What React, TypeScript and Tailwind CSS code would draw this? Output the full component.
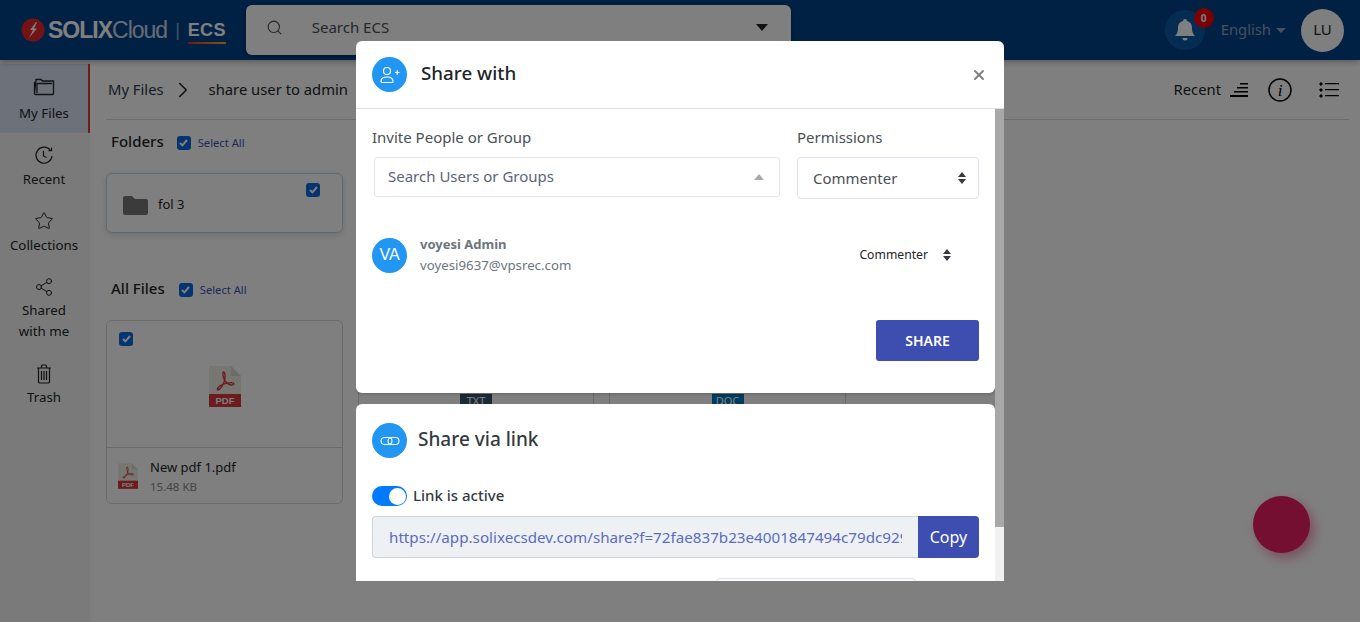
import React from 'react';
import { Search, Star, Share2, X, ChevronRight } from 'lucide-react';

const font = "font-['Noto_Sans','Open_Sans',sans-serif]";

function FolderStackIcon() {
  return (
    <svg width="22" height="18" viewBox="0 0 22 18" fill="none" stroke="currentColor" strokeWidth="1.3">
      <path d="M1.5 15.5V4.5h1.5M3 2.5V1.5h5l1.5 1.5H20.5V15.5a1 1 0 0 1-1 1H2.5a1 1 0 0 1-1-1Z" />
      <path d="M4 15V5.5h15" />
    </svg>
  );
}

function RecentIcon() {
  return (
    <svg width="20" height="20" viewBox="0 0 20 20" fill="none" stroke="currentColor" strokeWidth="1.2">
      <path d="M16.5 5.5A8 8 0 1 0 18 11" />
      <path d="M14.5 5.6h3V2.6" />
      <path d="M9.5 6v5l3 1.5" />
    </svg>
  );
}

function TrashIcon() {
  return (
    <svg width="16" height="20" viewBox="0 0 16 20" fill="none" stroke="currentColor" strokeWidth="1.2">
      <path d="M1 4h14M5.5 4V2a1 1 0 0 1 1-1h3a1 1 0 0 1 1 1v2" />
      <path d="M2.5 4v14a1 1 0 0 0 1 1h9a1 1 0 0 0 1-1V4" />
      <path d="M5.5 7v9M8 7v9M10.5 7v9" />
    </svg>
  );
}

function Check() {
  return (
    <span className="w-[14px] h-[14px] rounded-[3px] bg-[#0a6ae0] flex items-center justify-center shrink-0">
      <svg width="9" height="8" viewBox="0 0 9 8" fill="none" stroke="white" strokeWidth="2">
        <path d="M1 4l2.4 2.4L8 1" />
      </svg>
    </span>
  );
}

function PdfIcon({ w, h }: { w: number; h: number }) {
  return (
    <svg width={w} height={h} viewBox="0 0 32 41">
      <path d="M0 0h22l10 10v31H0Z" fill="#efefe4" />
      <path d="M22 0l10 10H22Z" fill="#d8d8cc" />
      <rect y="28" width="32" height="13" fill="#d9363e" />
      <text x="16" y="38" textAnchor="middle" fontSize="9.5" fontWeight="700" fill="#fff" fontFamily="Liberation Sans, sans-serif">PDF</text>
      <path d="M9 24c3-1 6-6 7-12 .4-2.500-.2-6-1.300-6s-1 3.500 0 6c1.500 4 4 6.500 7.500 7 2 .3 3-.6 2.600-1.400-.5-1-4-1-7.500-.2-3.500.8-7 2.500-8.500 4.600-.6.9-.5 2 .2 2Z" fill="none" stroke="#d9363e" strokeWidth="1.400" />
    </svg>
  );
}

function BlueCircle({ children }: { children: React.ReactNode }) {
  return (
    <div className="w-[35px] h-[35px] rounded-full bg-[#2196f3] flex items-center justify-center text-white shrink-0">
      {children}
    </div>
  );
}

function Updown({ className }: { className: string }) {
  return (
    <svg className={className} width="8" height="12" viewBox="0 0 8 12" fill="currentColor">
      <path d="M4 0l4 5H0ZM4 12L0 7h8Z" />
    </svg>
  );
}

const navItems = [
  { label: ['Recent'], icon: <RecentIcon />, h: 'h-[66px] gap-[4px]' },
  { label: ['Collections'], icon: <Star size={20} strokeWidth={1.2} />, h: 'h-[66px] gap-[4px]' },
  { label: ['Shared', 'with me'], icon: <Share2 size={20} strokeWidth={1.2} />, h: 'h-[87px] gap-[3px]' },
  { label: ['Trash'], icon: <TrashIcon />, h: 'h-[66px] gap-[3px]' },
];

function FileCard({ tag, tagColor, width }: { tag: string; tagColor: string; width: string }) {
  return (
    <div className={`${width} h-[184px] border border-[#d4d4d4] rounded-md flex flex-col`}>
      <div className="h-[126px] pt-[5px] flex items-center justify-center">
        <div className="w-[32px] h-[41px] bg-[#efefe4] flex items-end">
          <span className={`w-full h-[13px] ${tagColor} text-white text-[11px] leading-[13px] text-center`}>{tag}</span>
        </div>
      </div>
      <div className="flex-1 border-t border-[#d4d4d4]" />
    </div>
  );
}

export default function App() {
  return (
    <div className={`relative w-[1360px] h-[622px] overflow-hidden bg-white text-[#212529] ${font}`}>
      <header className="h-[60px] bg-[#004289] flex items-center pl-[21px] pr-[16px] shadow-[0_2px_6px_rgba(0,0,0,0.3)] relative">
        <div className="flex items-center font-['Liberation_Sans',sans-serif] text-white">
          <svg width="24" height="24" viewBox="0 0 24 24" className="mr-[3px]">
            <circle cx="12" cy="12" r="11.500" fill="#e8262a" />
            <path d="M15 4L9 12h3l-4 8 8-9.500h-3l3-6.500Z" fill="#fff" />
          </svg>
          <span className="text-[23px] font-bold tracking-[-1px]">SOLIX</span>
          <span className="text-[23px] font-light tracking-[-1px] opacity-80">Cloud</span>
          <span className="mx-[8px] text-[18px] opacity-50">|</span>
          <span className="relative text-[18px] font-bold tracking-[0.3px]">
            ECS
            <span className="absolute left-0 right-0 bottom-0 h-[2px] bg-gradient-to-r from-[#e8262a] to-[#f5a623]" />
          </span>
        </div>
        <div className="ml-[20px] w-[545px] h-[50px] pb-[5px] bg-white rounded-md shadow-[0_1px_4px_rgba(0,0,0,0.4)] flex items-center pl-[20px] pr-[23px] text-[#495057]">
          <Search size={17} strokeWidth={1.500} />
          <span className="ml-[29px] text-[15px]">Search ECS</span>
          <span className="ml-auto w-0 h-0 border-x-[6px] border-x-transparent border-t-[7px] border-t-[#212529]" />
        </div>
        <div className="ml-auto flex items-center">
          <div className="relative w-[40px] h-[40px] rounded-full bg-[#0b5aa8] flex items-center justify-center mr-[16px]">
            <svg width="22" height="24" viewBox="0 0 22 24" fill="white">
              <path d="M11 1a2 2 0 0 1 2 2c3.500.8 5 3.500 5 7 0 4 1 6 3 8H1c2-2 3-4 3-8 0-3.500 1.500-6.200 5-7a2 2 0 0 1 2-2ZM8.500 20h5a2.500 2.500 0 0 1-5 0Z" />
            </svg>
            <span className="absolute -top-[2px] -right-[9px] w-[20px] h-[20px] rounded-full bg-[#f40009] text-white text-[10px] font-bold flex items-center justify-center">0</span>
          </div>
          <span className="pb-[1px] text-[14.8px] text-[#8aa0c0]">English</span>
          <span className="ml-[5px] w-0 h-0 border-x-[5px] border-x-transparent border-t-[5px] border-t-[#8aa0c0]" />
          <div className="ml-[15px] w-[43px] h-[43px] pb-[1px] rounded-full bg-white flex items-center justify-center text-[15px]">LU</div>
        </div>
      </header>

      <div className="flex h-[562px]">
        <aside className="w-[90px] bg-[#f5f5f5] pt-[4px] shrink-0 text-[13.3px] text-[#212529]">
          <div className="h-[69px] bg-[#d8e3f5] border-r-2 border-[#e53935] flex flex-col items-center pt-[14px] gap-[7px]">
            <FolderStackIcon />
            <span className="leading-5">My Files</span>
          </div>
          {navItems.map((item) => (
            <div key={item.label[0]} className={`${item.h} pr-[2px] flex flex-col items-center pt-[12px]`}>
              {item.icon}
              <span className="text-center leading-[21px]">
                {item.label.map((l) => (
                  <span key={l} className="block">{l}</span>
                ))}
              </span>
            </div>
          ))}
        </aside>

        <main className="flex-1 pl-[16px] pr-[11px]">
          <div className="h-[60px] border-b border-[#d8d8d8] flex items-center pl-[2px] text-[14.8px]">
            <span className="text-[#2a3a50]">My Files</span>
            <ChevronRight size={26} strokeWidth={1.500} className="ml-[6px] mr-[13px]" />
            <span>share user to admin</span>
            <div className="ml-auto flex items-center pr-[10px]">
              <span>Recent</span>
              <svg width="18" height="14" viewBox="0 0 18 14" fill="#000" className="ml-[9px]">
                <path d="M10 0h8v1.500h-8ZM7 4h11v1.500H7ZM4 8h14v1.500H4ZM0 12h18v2H0Z" />
              </svg>
              <svg width="24" height="24" viewBox="0 0 24 24" className="ml-[20px]">
                <circle cx="12" cy="12" r="11" fill="none" stroke="#000" strokeWidth="1.500" />
                <text x="12" y="18" textAnchor="middle" fontSize="17" fontStyle="italic" fontFamily="Liberation Serif, serif">i</text>
              </svg>
              <svg width="20" height="16" viewBox="0 0 20 16" fill="#000" className="ml-[27px]">
                <path d="M0 2l2-2 2 2-2 2ZM0 8l2-2 2 2-2 2ZM0 14l2-2 2 2-2 2ZM6 1h14v1.300H6ZM6 7h14v1.300H6ZM6 13h14v1.300H6Z" />
              </svg>
            </div>
          </div>

          <div className="flex items-center h-[42px] mt-[1px] pl-[5px]">
            <span className="pb-[2px] text-[15px] font-medium">Folders</span>
            <span className="ml-[13px] mt-[2px]">
              <Check />
            </span>
            <span className="ml-[7px] mt-[2px] text-[11.2px] text-[#3f51b5]">Select All</span>
          </div>
          <div className="relative mt-[10px] w-[237px] h-[60px] pt-[4px] border border-[#b9d6e8] rounded-md shadow-[0_2px_6px_rgba(0,0,0,0.15)] flex items-center pl-[16px] gap-[10px] text-[13px]">
            <svg width="25" height="19" viewBox="0 0 25 19" fill="#777">
              <path d="M0 2a2 2 0 0 1 2-2h7l3 3h11a2 2 0 0 1 2 2v12a2 2 0 0 1-2 2H2a2 2 0 0 1-2-2Z" />
            </svg>
            <span>fol 3</span>
            <span className="absolute top-[9px] right-[22px]">
              <Check />
            </span>
          </div>

          <div className="flex items-center h-[43px] mt-[34px] pl-[5px]">
            <span className="text-[15px] font-medium">All Files</span>
            <span className="ml-[14px] mt-[3px]">
              <Check />
            </span>
            <span className="ml-[7px] mt-[3px] text-[11.2px] text-[#3f51b5]">Select All</span>
          </div>
          <div className="flex gap-[15px] mt-[10px]">
            <div className="relative w-[237px] h-[184px] border border-[#d4d4d4] rounded-md flex flex-col">
              <span className="absolute top-[11px] left-[12px]">
                <Check />
              </span>
              <div className="h-[126px] pt-[5px] flex items-center justify-center">
                <PdfIcon w={32} h={41} />
              </div>
              <div className="flex-1 border-t border-[#d4d4d4] pl-[11px] flex items-center gap-[12px]">
                <PdfIcon w={20} h={26} />
                <div>
                  <div className="text-[13px] leading-5">New pdf 1.pdf</div>
                  <div className="mt-[2px] text-[11.500px] leading-4 text-[#888]">15.48 KB</div>
                </div>
              </div>
            </div>
            <FileCard tag="TXT" tagColor="bg-[#37566b]" width="w-[236px]" />
            <FileCard tag="DOC" tagColor="bg-[#0277bd]" width="w-[237px]" />
          </div>
        </main>
      </div>

      {/* Add button */}
      <div className="absolute left-[1253px] top-[496px] w-[57px] h-[57px] rounded-full bg-[#e91e63] shadow-[4px_5px_12px_rgba(233,30,99,0.45)]" />

      {/* Backdrop */}
      <div className="absolute inset-0 bg-black/50" />

      {/* Share dialog */}
      <div className="absolute left-[356px] top-[41px] w-[648px] h-[540px] flex flex-col overflow-hidden rounded-t-md">
        <div className="h-[68px] bg-white border-b border-[#dee2e6] flex items-center pl-[16px] pr-[17px] shrink-0">
          <BlueCircle>
            <svg width="20" height="17" viewBox="0 0 20 17" fill="none" stroke="currentColor" strokeWidth="1.200">
              <circle cx="7" cy="5" r="3.500" />
              <path d="M1 15.500c0-3 2.500-4.500 6-4.500s6 1.500 6 4.500c0 .5-.5 1-1 1H2c-.5 0-1-.5-1-1ZM15 6.500h4.500M17.200 4.200v4.500" />
            </svg>
          </BlueCircle>
          <span className="ml-[14px] pb-[2px] text-[18.800px] font-medium">Share with</span>
          <X size={16} strokeWidth={3} className="ml-auto text-[#808080]" />
        </div>

        <div className="flex-1 flex min-h-0">
          <div className="w-[639px] flex flex-col gap-[11px] overflow-hidden">
            <div className="h-[284px] shrink-0 bg-white rounded-b-md px-[16px] pt-[16px] shadow-[0_1px_3px_rgba(0,0,0,0.2)]">
              <div className="flex">
                <div className="w-[425px]">
                  <div className="text-[15px] leading-[24px] text-[#495057]">Invite People or Group</div>
                  <div className="mt-[8px] ml-[2px] w-[406px] h-[40px] pb-[1px] border border-[#e3e6ea] rounded-[3px] flex items-center pl-[13px] pr-[15px] text-[15px] text-[#5a6478]">
                    Search Users or Groups
                    <span className="ml-auto w-0 h-0 border-x-[5px] border-x-transparent border-b-[6px] border-b-[#aaa]" />
                  </div>
                </div>
                <div className="w-[182px]">
                  <div className="text-[15px] leading-[24px] text-[#495057]">Permissions</div>
                  <div className="mt-[8px] h-[42px] border border-[#e0e0ea] rounded-[4px] flex items-center pl-[15px] pr-[12px] text-[15px] text-[#495057]">
                    Commenter
                    <Updown className="ml-auto text-[#343a40]" />
                  </div>
                </div>
              </div>
              <div className="flex items-center mt-[35px]">
                <BlueCircle>
                  <span className="font-['Liberation_Sans',sans-serif] text-[16px]">VA</span>
                </BlueCircle>
                <div className="ml-[13px]">
                  <div className="text-[13px] font-bold leading-[20px] text-[#6c757d]">voyesi Admin</div>
                  <div className="text-[13.250px] leading-[22px] text-[#6c757d]">voyesi9637@vpsrec.com</div>
                </div>
                <span className="ml-auto text-[12.200px] text-[#212529]">Commenter</span>
                <Updown className="ml-[15px] mr-[28px] text-[#343a40]" />
              </div>
              <div className="flex justify-end mt-[44px]">
                <div className="w-[103px] h-[41px] bg-[#3d4eb0] rounded-[3px] text-white text-[14px] font-semibold flex items-center justify-center">SHARE</div>
              </div>
            </div>

            <div className="flex-1 bg-white rounded-t-md px-[16px] pt-[19px] relative">
              <div className="flex items-center">
                <BlueCircle>
                  <svg width="20" height="10" viewBox="0 0 20 10" fill="none" stroke="currentColor" strokeWidth="1.100">
                    <rect x="1" y="1.500" width="11" height="7" rx="3.500" />
                    <rect x="8" y="1.500" width="11" height="7" rx="3.500" />
                  </svg>
                </BlueCircle>
                <span className="ml-[11px] pb-[2px] text-[19px] font-medium text-[#343a40]">Share via link</span>
              </div>
              <div className="flex items-center mt-[28px] h-[20px]">
                <span className="w-[35px] h-[20px] rounded-full bg-[#007bff] flex items-center justify-end pr-[1px]">
                  <span className="w-[17px] h-[17px] rounded-full bg-white" />
                </span>
                <span className="ml-[6px] pb-[2px] text-[15px] font-medium text-[#343a40]">Link is active</span>
              </div>
              <div className="mt-[10px] flex w-[607px] h-[42px]">
                <div className="flex-1 min-w-0 bg-[#eef1f4] border border-[#ced4da] border-r-0 rounded-l-[4px] pl-[16px] pr-[16px] flex items-center">
                  <span className="block overflow-hidden whitespace-nowrap text-[15.200px] text-[#5c6bc0]">https://app.solixecsdev.com/share?f=72fae837b23e4001847494c79dc929</span>
                </div>
                <div className="w-[61px] bg-[#3d4eb0] text-white text-base rounded-r-[4px] flex items-center justify-center">Copy</div>
              </div>
              <div className="absolute left-[360px] top-[174px] w-[200px] h-[20px] border border-[#e0e0ea] rounded-[4px]" />
            </div>
          </div>
          <div className="w-[9px] flex flex-col bg-[#f1f1f1]">
            <div className="h-[418px] bg-[#a8a8a8]" />
          </div>
        </div>
      </div>
    </div>
  );
}
